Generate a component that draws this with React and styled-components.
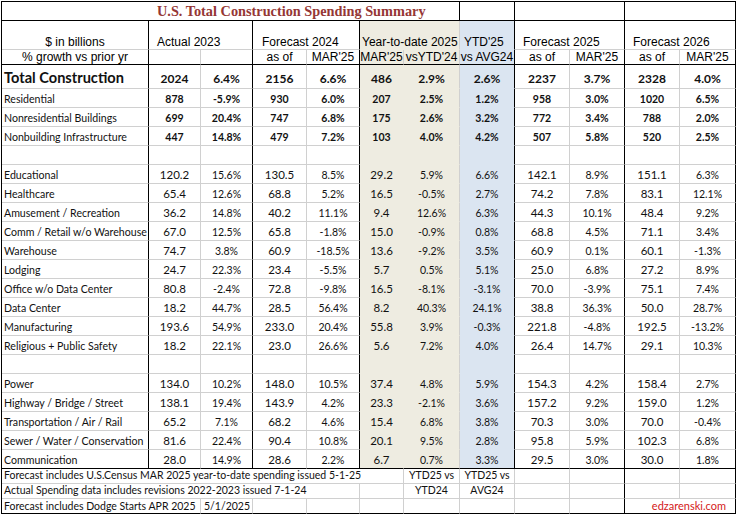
import React from 'react';
import styled, { createGlobalStyle } from 'styled-components';

const GlobalStyle = createGlobalStyle`
  html, body { margin: 0; padding: 0; background: #fff; }
  body { font-family: Lato, "Liberation Sans", sans-serif; color: #111; }
`;

const COLS = [147, 52, 52, 54, 53, 44, 56, 55, 55, 55, 55, 56];
const TEMPLATE = COLS.map((c) => `${c}px`).join(' ');

const INK = '#000';
const GRID = '#d0d0d0';
const BEIGE = '#eeece1';
const BLUE = '#dbe5f1';

const line = (k) => (k === 'thick' ? INK : k === 'thin' ? GRID : 'transparent');

const Sheet = styled.div`
  display: flex;
  flex-direction: column;
  width: max-content;
  margin: 1px 0 0 1px;
  border-left: 1px solid ${INK};
  border-top: 1px solid ${INK};
`;

const Row = styled.div`
  display: grid;
  grid-template-columns: ${TEMPLATE};
  height: ${(p) => p.$h}px;
`;

const Cell = styled.div`
  grid-column: span ${(p) => p.$span || 1};
  box-sizing: border-box;
  min-width: 0;
  display: flex;
  align-items: ${(p) => p.$v || 'flex-end'};
  justify-content: ${(p) => p.$align || 'center'};
  padding: 0 ${(p) => p.$px ?? 2}px ${(p) => p.$pb ?? 2}px ${(p) => p.$pl ?? p.$px ?? 2}px;
  background: ${(p) => p.$bg || '#fff'};
  border-right: 1px solid ${(p) => line(p.$r)};
  border-bottom: 1px solid ${(p) => line(p.$b)};
  white-space: nowrap;
`;

const Title = styled.span`
  font-family: "Liberation Serif", "Times New Roman", serif;
  font-weight: 700;
  font-size: 14.3px;
  line-height: 16px;
  color: #953735;
`;

const HeadText = styled.span`
  font-family: "Liberation Sans", Arial, sans-serif;
  font-size: 12px;
  line-height: 14px;
  color: #000;
`;

const Label = styled.span`
  font-family: Lato, "Open Sans", sans-serif;
  font-size: ${(p) => (p.$total ? 14.6 : 10.6)}px;
  font-weight: ${(p) => (p.$total ? 700 : 400)};
  line-height: 1.2;
  color: #111;
`;

const SIZES = {
  num: [11.5, 400],
  pct: [10.5, 400],
  bnum: [10.5, 700],
  tnum: [12, 700],
};

const Value = styled.span`
  font-family: Lato, "Open Sans", sans-serif;
  font-size: ${(p) => SIZES[p.$kind][0]}px;
  font-weight: ${(p) => SIZES[p.$kind][1]};
  line-height: 1.2;
  color: #111;
`;

const Note = styled.span`
  font-family: Lato, "Open Sans", sans-serif;
  font-size: 10.5px;
  line-height: 1.2;
  color: #111;
`;

const Brand = styled.span`
  font-family: Lato, "Open Sans", sans-serif;
  font-size: 11px;
  line-height: 1.2;
  color: #d42020;
`;

const RIGHT = ['thick', 'thin', 'thick', 'thin', 'thick', 'none', 'thin', 'thick', 'thin', 'thick', 'thin', 'thick'];
const BG = [null, null, null, null, null, BEIGE, BEIGE, BLUE, null, null, null, null];
const KIND = ['label', 'num', 'pct', 'num', 'pct', 'num', 'pct', 'pct', 'num', 'pct', 'num', 'pct'];

const summary = [
  ['Total Construction', '2024', '6.4%', '2156', '6.6%', '486', '2.9%', '2.6%', '2237', '3.7%', '2328', '4.0%'],
  ['Residential', '878', '-5.9%', '930', '6.0%', '207', '2.5%', '1.2%', '958', '3.0%', '1020', '6.5%'],
  ['Nonresidential Buildings', '699', '20.4%', '747', '6.8%', '175', '2.6%', '3.2%', '772', '3.4%', '788', '2.0%'],
  ['Nonbuilding Infrastructure', '447', '14.8%', '479', '7.2%', '103', '4.0%', '4.2%', '507', '5.8%', '520', '2.5%'],
];

const segments = [
  ['Educational', '120.2', '15.6%', '130.5', '8.5%', '29.2', '5.9%', '6.6%', '142.1', '8.9%', '151.1', '6.3%'],
  ['Healthcare', '65.4', '12.6%', '68.8', '5.2%', '16.5', '-0.5%', '2.7%', '74.2', '7.8%', '83.1', '12.1%'],
  ['Amusement / Recreation', '36.2', '14.8%', '40.2', '11.1%', '9.4', '12.6%', '6.3%', '44.3', '10.1%', '48.4', '9.2%'],
  ['Comm / Retail w/o Warehouse', '67.0', '12.5%', '65.8', '-1.8%', '15.0', '-0.9%', '0.8%', '68.8', '4.5%', '71.1', '3.4%'],
  ['Warehouse', '74.7', '3.8%', '60.9', '-18.5%', '13.6', '-9.2%', '3.5%', '60.9', '0.1%', '60.1', '-1.3%'],
  ['Lodging', '24.7', '22.3%', '23.4', '-5.5%', '5.7', '0.5%', '5.1%', '25.0', '6.8%', '27.2', '8.9%'],
  ['Office w/o Data Center', '80.8', '-2.4%', '72.8', '-9.8%', '16.5', '-8.1%', '-3.1%', '70.0', '-3.9%', '75.1', '7.4%'],
  ['Data Center', '18.2', '44.7%', '28.5', '56.4%', '8.2', '40.3%', '24.1%', '38.8', '36.3%', '50.0', '28.7%'],
  ['Manufacturing', '193.6', '54.9%', '233.0', '20.4%', '55.8', '3.9%', '-0.3%', '221.8', '-4.8%', '192.5', '-13.2%'],
  ['Religious + Public Safety', '18.2', '22.1%', '23.0', '26.6%', '5.6', '7.2%', '4.0%', '26.4', '14.7%', '29.1', '10.3%'],
];

const infra = [
  ['Power', '134.0', '10.2%', '148.0', '10.5%', '37.4', '4.8%', '5.9%', '154.3', '4.2%', '158.4', '2.7%'],
  ['Highway / Bridge / Street', '138.1', '19.4%', '143.9', '4.2%', '23.3', '-2.1%', '3.6%', '157.2', '9.2%', '159.0', '1.2%'],
  ['Transportation / Air / Rail', '65.2', '7.1%', '68.2', '4.6%', '15.4', '6.8%', '3.8%', '70.3', '3.0%', '70.0', '-0.4%'],
  ['Sewer / Water / Conservation', '81.6', '22.4%', '90.4', '10.8%', '20.1', '9.5%', '2.8%', '95.8', '5.9%', '102.3', '6.8%'],
  ['Communication', '28.0', '14.9%', '28.6', '2.2%', '6.7', '0.7%', '3.3%', '29.5', '3.0%', '30.0', '1.8%'],
];

function DataRow({ cells, h = 19, variant = 'plain', last = false }) {
  return (
    <Row $h={h}>
      {COLS.map((_, i) => {
        const bottom = last ? 'thick' : BG[i] ? 'none' : 'thin';
        const text = cells ? cells[i] : '';
        let content = null;
        if (text) {
          if (i === 0) {
            content = <Label $total={variant === 'total'}>{text}</Label>;
          } else {
            const kind =
              variant === 'total' ? 'tnum' : variant === 'bold' ? 'bnum' : KIND[i];
            content = <Value $kind={kind}>{text}</Value>;
          }
        }
        return (
          <Cell
            key={i}
            $r={RIGHT[i]}
            $b={bottom}
            $bg={BG[i]}
            $align={i === 0 ? 'flex-start' : 'center'}
            $pb={variant === 'total' ? 2 : 1}
          >
            {content}
          </Cell>
        );
      })}
    </Row>
  );
}

function Header() {
  return (
    <>
      <Row $h={19}>
        <Cell $span={7} $r="thick" $b="thick" $align="flex-start" $v="center" $px={0} $pl={155} $pb={0}>
          <Title>U.S. Total Construction Spending Summary</Title>
        </Cell>
        <Cell $r="thick" $b="thick" />
        <Cell $span={2} $r="thick" $b="thick" />
        <Cell $span={2} $r="thick" $b="thick" />
      </Row>
      <Row $h={29}>
        <Cell $r="thick" $b="thin" $pb={0}>
          <HeadText>$ in billions</HeadText>
        </Cell>
        <Cell $span={2} $r="thick" $b="thin" $align="flex-start" $px={8} $pb={0}>
          <HeadText>Actual 2023</HeadText>
        </Cell>
        <Cell $span={2} $r="thick" $b="thin" $align="flex-start" $px={9} $pb={0}>
          <HeadText>Forecast 2024</HeadText>
        </Cell>
        <Cell $span={2} $r="thin" $b="none" $bg={BEIGE} $align="flex-start" $px={2} $pb={0}>
          <HeadText>Year-to-date 2025</HeadText>
        </Cell>
        <Cell $r="thick" $b="none" $bg={BLUE} $align="flex-start" $px={4} $pb={0}>
          <HeadText>YTD'25</HeadText>
        </Cell>
        <Cell $span={2} $r="thick" $b="thin" $align="flex-start" $px={8} $pb={0}>
          <HeadText>Forecast 2025</HeadText>
        </Cell>
        <Cell $span={2} $r="thick" $b="thin" $align="flex-start" $px={8} $pb={0}>
          <HeadText>Forecast 2026</HeadText>
        </Cell>
      </Row>
      <Row $h={15}>
        <Cell $r="thick" $b="thick" $v="center" $pb={0}>
          <HeadText>% growth vs prior yr</HeadText>
        </Cell>
        <Cell $r="thin" $b="thick" />
        <Cell $r="thick" $b="thick" />
        <Cell $r="thin" $b="thick" $v="center" $pb={0}>
          <HeadText>as of</HeadText>
        </Cell>
        <Cell $r="thick" $b="thick" $v="center" $pb={0}>
          <HeadText>MAR'25</HeadText>
        </Cell>
        <Cell $r="thin" $b="thick" $bg={BEIGE} $v="center" $pb={0} $px={0}>
          <HeadText>MAR'25</HeadText>
        </Cell>
        <Cell $r="thin" $b="thick" $bg={BEIGE} $v="center" $pb={0} $px={0}>
          <HeadText>vsYTD'24</HeadText>
        </Cell>
        <Cell $r="thick" $b="thick" $bg={BLUE} $v="center" $pb={0} $px={0}>
          <HeadText>vs AVG24</HeadText>
        </Cell>
        <Cell $r="thin" $b="thick" $v="center" $pb={0}>
          <HeadText>as of</HeadText>
        </Cell>
        <Cell $r="thick" $b="thick" $v="center" $pb={0}>
          <HeadText>MAR'25</HeadText>
        </Cell>
        <Cell $r="thin" $b="thick" $v="center" $pb={0}>
          <HeadText>as of</HeadText>
        </Cell>
        <Cell $r="thick" $b="thick" $v="center" $pb={0}>
          <HeadText>MAR'25</HeadText>
        </Cell>
      </Row>
    </>
  );
}

function Footnotes() {
  return (
    <>
      <Row $h={15}>
        <Cell $span={6} $r="thin" $b="thin" $align="flex-start" $pb={1}>
          <Note>Forecast includes U.S.Census MAR 2025 year-to-date spending issued 5-1-25</Note>
        </Cell>
        <Cell $r="thin" $b="thin" $pb={1}><Note>YTD25 vs</Note></Cell>
        <Cell $r="thin" $b="thin" $pb={1}><Note>YTD25 vs</Note></Cell>
        <Cell $r="thin" $b="thin" />
        <Cell $r="thick" $b="thin" />
        <Cell $r="thin" $b="thin" />
        <Cell $r="thick" $b="thin" />
      </Row>
      <Row $h={15}>
        <Cell $span={5} $r="thin" $b="thin" $align="flex-start" $pb={1}>
          <Note>Actual Spending data includes revisions 2022-2023 issued 7-1-24</Note>
        </Cell>
        <Cell $r="thin" $b="thin" />
        <Cell $r="thin" $b="thin" $pb={1}><Note>YTD24</Note></Cell>
        <Cell $r="thin" $b="thin" $pb={1}><Note>AVG24</Note></Cell>
        <Cell $r="thin" $b="thin" />
        <Cell $r="thick" $b="thin" />
        <Cell $r="thin" $b="thin" />
        <Cell $r="thick" $b="thin" />
      </Row>
      <Row $h={15}>
        <Cell $span={2} $r="thin" $b="thick" $align="flex-start" $pb={1}>
          <Note>Forecast includes Dodge Starts APR 2025</Note>
        </Cell>
        <Cell $r="thin" $b="thick" $align="flex-end" $pb={1}>
          <Note>5/1/2025</Note>
        </Cell>
        <Cell $r="thin" $b="thick" />
        <Cell $r="thin" $b="thick" />
        <Cell $r="thin" $b="thick" />
        <Cell $r="thin" $b="thick" />
        <Cell $r="thin" $b="thick" />
        <Cell $r="thin" $b="thick" />
        <Cell $r="thick" $b="thick" />
        <Cell $span={2} $r="thick" $b="thick" $align="flex-end" $px={9} $pb={1}>
          <Brand>edzarenski.com</Brand>
        </Cell>
      </Row>
    </>
  );
}

export default function App() {
  return (
    <>
      <GlobalStyle />
      <Sheet>
        <Header />
        <DataRow cells={summary[0]} h={24} variant="total" />
        {summary.slice(1).map((r) => (
          <DataRow key={r[0]} cells={r} variant="bold" />
        ))}
        <DataRow />
        {segments.map((r) => (
          <DataRow key={r[0]} cells={r} />
        ))}
        <DataRow />
        {infra.map((r, i) => (
          <DataRow key={r[0]} cells={r} last={i === infra.length - 1} />
        ))}
        <Footnotes />
      </Sheet>
    </>
  );
}
